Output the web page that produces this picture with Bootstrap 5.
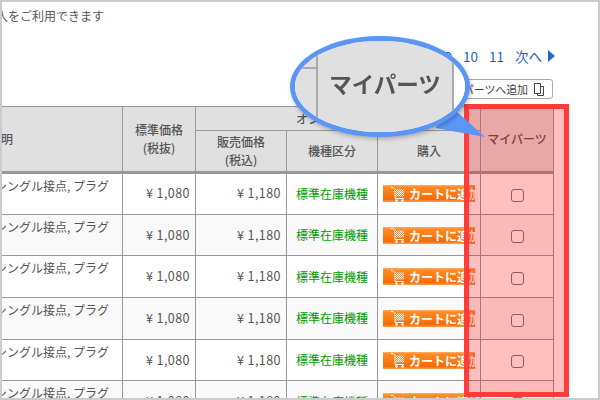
<!DOCTYPE html>
<html lang="ja"><head><meta charset="utf-8">
<link href="https://cdn.jsdelivr.net/npm/bootstrap@5.3.0/dist/css/bootstrap.min.css" rel="stylesheet">
<style>
html,body{margin:0;height:400px;overflow:hidden;background:#fff}
body{font-family:"Noto Sans CJK JP","Liberation Sans",sans-serif;color:#555;font-size:12px}
.shot{position:relative;width:600px;height:400px;border:2px solid #ccc;overflow:hidden}
.intro{margin:4px 0 0 -18px;height:32px;line-height:20px;font-size:12px;white-space:nowrap}
.pager{height:28px;padding-right:43px;gap:11px;color:#1f63b8;font-size:13.5px;line-height:28px;margin-top:4px}
.pager b{font-weight:400}
.tri{width:0;height:0;border-left:7px solid #1f6fd0;border-top:6px solid transparent;border-bottom:6px solid transparent;margin-left:-5px}
.addrow{height:30px;padding-right:45px;padding-top:9px}
.addbtn{width:94px;height:20px;border:1px solid #aaa;border-radius:3px;font-size:11px;line-height:18px;color:#444;padding-right:7px;background:#fff;gap:5px;letter-spacing:-.1px}
.tbl-clip{margin-left:-2px;margin-top:6px;width:580px}
.ptable{border-collapse:collapse;table-layout:fixed;width:553px;font-size:12px;color:#555}
.ptable th,.ptable td{border:1px solid #999;padding:0}
.ptable th{background:#e0e0e0;text-align:center;font-weight:500;line-height:18px;color:#555}
.ptable thead tr:last-child th,.ptable th.tall{border-bottom:3px solid #999}
.ptable td{height:41.7px;vertical-align:middle;background:#fff}
.ptable tbody tr:nth-child(even) td{background:#f9f9f9}
.desc{vertical-align:top!important;white-space:nowrap;overflow:hidden;line-height:22px}
.desc div{margin-left:-6px;margin-top:1px;text-align:left}
.yen{text-align:right;padding-right:5px!important;letter-spacing:.45px;font-size:12.5px}
.stock{text-align:center;color:#090;white-space:nowrap;font-size:12px}
.cart{display:flex;align-items:center;width:92px;height:17px;margin:0 0 0 5px;background:linear-gradient(#ffb06a 0,#ff8a25 12%,#f97d16 50%,#f76a08 85%,#ffa050 100%);color:#fff;font-size:12px;font-weight:700;line-height:17px;white-space:nowrap;overflow:hidden;padding-left:8px;gap:4px}
.cart svg{flex:none}
.boxcell{text-align:center}
.boxcell input{width:13px;height:13px;margin:0;border:1px solid #777;border-radius:2px;vertical-align:middle;float:none;background-color:#fff}
.redbox{position:absolute;left:462px;top:102px;width:105px;height:293px;border:5px solid #ff3b3b;background:rgba(255,0,0,.25)}
.tail{position:absolute;left:425px;top:100px}
.bubble{position:absolute;left:288px;top:34px;width:180px;height:101px;border:5px solid #5b96f7;border-radius:50%;overflow:hidden;background:#fff;box-shadow:1px 2px 4px rgba(0,0,0,.25)}
.bg-in{display:flex;height:100%;background:#e0e0e0}
.bg-left{width:23px;border-right:2px solid #aaa}
.bg-left i{display:block;height:28px;border-bottom:2px solid #aaa}
.bg-mid{width:136px;border-right:2px solid #aaa;font-size:22.5px;font-weight:700;color:#555;text-align:center;line-height:84px;white-space:nowrap;filter:blur(.4px)}
.bg-right{flex:1;background:#fff}
</style></head><body>
<div class="shot">
<div class="intro">購入をご利用できます</div>
<div class="pager d-flex justify-content-end align-items-center"><b>9</b><b>10</b><b>11</b><b>次へ</b><span class="tri"></span></div>
<div class="addrow d-flex justify-content-end"><div class="addbtn d-flex justify-content-end align-items-center">パーツへ追加<svg width="12" height="15" viewBox="0 0 12 15"><path d="M1.5 1.5h6v10h-6zM7.5 4.5h3v9h-6v-2" fill="none" stroke="#444"/></svg></div></div>
<div class="tbl-clip">
<table class="ptable">
<colgroup><col style="width:122px"><col style="width:73px"><col style="width:91px"><col style="width:91px"><col style="width:103px"><col style="width:73px"></colgroup>
<thead>
<tr style="height:24px"><th rowspan="2" class="tall" style="text-align:left">明</th><th rowspan="2" class="tall">標準価格<br>(税抜)</th><th colspan="3">オンライン価格</th><th rowspan="2" class="tall">マイパーツ</th></tr>
<tr style="height:42px"><th>販売価格<br>(税込)</th><th>機種区分</th><th>購入</th></tr>
</thead>
<tbody id="rows"></tbody>
</table>
</div>
<div class="redbox"></div>
<svg class="tail" width="62" height="42" viewBox="0 0 62 42"><path d="M8 26L28 8L58 35Z" fill="#5b96f7"/></svg>
<div class="bubble"><div class="bg-in"><div class="bg-left"><i></i></div><div class="bg-mid">マイパーツ</div><div class="bg-right"></div></div></div>
</div>
<svg width="0" height="0" class="position-absolute"><defs><pattern id="chk" width="2" height="2" patternUnits="userSpaceOnUse"><rect width="2" height="2" fill="#fff"/><rect width="1" height="1" fill="#f58a3a"/><rect x="1" y="1" width="1" height="1" fill="#f58a3a"/></pattern></defs></svg>
<script>
var r='';for(var i=0;i<6;i++){r+='<tr><td class="desc"><div>シングル接点, プラグ</div></td><td class="yen">¥ 1,080</td><td class="yen">¥ 1,180</td><td class="stock">標準在庫機種</td><td><div class="cart"><svg width="14" height="16" viewBox="0 0 14 16"><path d="M0 1.5h2l2 2v9h9" fill="none" stroke="#fff"/><path d="M4 3.5h9v7H4z" fill="url(#chk)"/><circle cx="5.5" cy="14.5" r="1.3" fill="#fff"/><circle cx="11.5" cy="14.5" r="1.3" fill="#fff"/></svg><span>カートに追加</span></div></td><td class="boxcell"><input type="checkbox" class="form-check-input"></td></tr>'}
document.getElementById('rows').innerHTML=r;
</script>
<script src="https://cdn.jsdelivr.net/npm/bootstrap@5.3.0/dist/js/bootstrap.bundle.min.js"></script>
</body></html>
